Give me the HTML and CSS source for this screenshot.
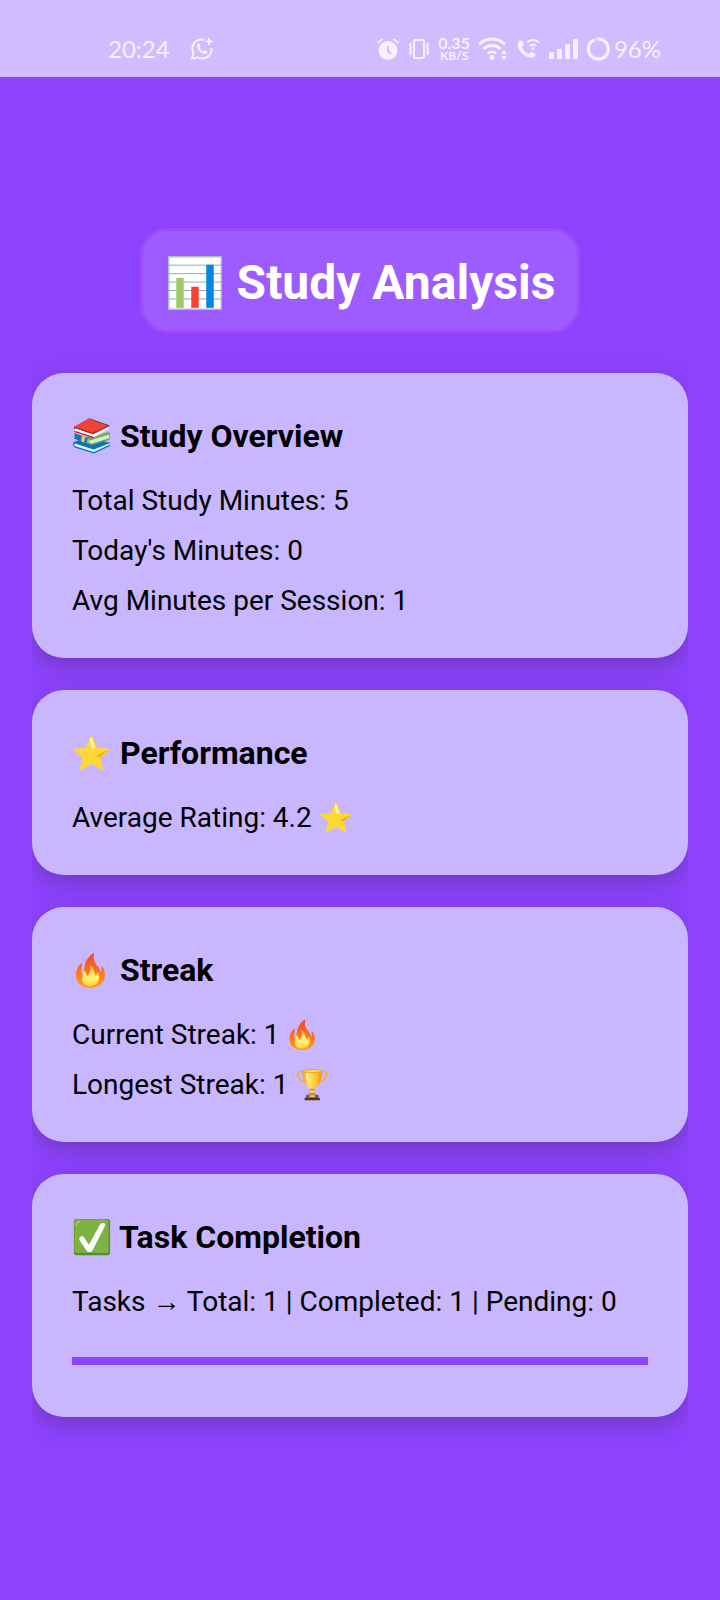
FILE: index.html
```html
<!DOCTYPE html>
<html lang="en">
  <head>
    <meta charset="UTF-8" />
    <meta name="viewport" content="width=device-width, initial-scale=1.0" />
    <title>Study Analysis</title>
    <link rel="stylesheet" href="styles.css">
  </head>

  <body>
    <!-- Shared emoji shapes -->
    <svg class="sprite" aria-hidden="true">
      <defs>
        <linearGradient id="flameFill" x1="0" y1="0" x2="0" y2="1">
          <stop offset="0" stop-color="#f4442e" />
          <stop offset="0.6" stop-color="#ff7b1a" />
          <stop offset="1" stop-color="#ff9c1c" />
        </linearGradient>
        <linearGradient id="flameCore" x1="0" y1="0" x2="0" y2="1">
          <stop offset="0" stop-color="#ffc23a" />
          <stop offset="0.6" stop-color="#fff27a" />
          <stop offset="1" stop-color="#ffd23c" />
        </linearGradient>
        <linearGradient id="cupFill" x1="0" y1="0" x2="1" y2="0">
          <stop offset="0" stop-color="#f79f1c" />
          <stop offset="0.35" stop-color="#ffe36b" />
          <stop offset="0.7" stop-color="#ffc42e" />
          <stop offset="1" stop-color="#ef9414" />
        </linearGradient>
      </defs>
      <symbol id="star" viewBox="-4 -6 140 140">
        <path fill="#fdd835" d="M68 7l16 39 39 3c4 0 5 4 2 7L95 81l10 37c1 4-3 7-6 5L64 102l-35 21c-3 2-7-1-6-5l10-37L3 56c-3-3-2-7 2-7l39-3L60 7c2-4 6-4 8 0z" />
        <path fill="#fff59d" d="M62 38l-3-25c0-5 5-5 7 0l10 27c2 5-1 9-5 9s-8-4-9-11z" />
        <path fill="#f4b400" d="M89 69l26-13c3-2 5 0 3 3L97 76c-5 4-11 5-13 2s0-6 5-9z" />
      </symbol>
      <symbol id="fire" viewBox="2 -8 142 142">
        <path fill="url(#flameFill)" d="M36 57c-2 8-1 15 3 21 2 3 6 2 6-2C43 48 52 20 76 4c3-2 5 0 4 4-4 17 2 29 14 43 4 5 7 11 8 17 1 3 5 2 5-2l-1-12c0-4 3-4 5-1 8 11 10 26 6 40-5 20-25 33-51 33-28 0-49-17-50-42-1-20 7-33 17-43 2-2 5-1 4 2z" />
        <path fill="url(#flameCore)" d="M65 51c-2-3 1-6 4-3 11 9 12 21 15 31 1 4 4 4 5 1l2-7c1-3 3-2 4 0 7 17 4 46-29 47-24 0-33-19-26-37 2-5 3-9 3-14 0-3 3-3 5-1 4 4 5 9 7 14 1 3 4 2 5-1 4-10 11-18 5-30z" />
      </symbol>
      <symbol id="trophy" viewBox="-4 -6 138 138">
        <path fill="none" stroke="#f6ae2d" stroke-width="6" d="M31 21C22 7 6 10 7 23c1 17 13 26 31 34M97 21c9-14 25-11 24 2-1 17-13 26-31 34" />
        <path fill="url(#cupFill)" d="M27 9h74c1 33-5 57-26 68-3 2-5 6-5 10v13H58V87c0-4-2-8-5-10C32 66 26 42 27 9z" />
        <path fill="#fff3a0" d="M39 18h9c-1 20 2 33 9 45-14-8-19-25-18-45z" />
        <ellipse cx="64" cy="10" rx="37" ry="6" fill="#ffd85a" stroke="#e99514" stroke-width="3" />
        <path fill="#e09013" d="M54 80h20l-2 7H56zM51 96h26v7H51z" />
        <path fill="#795548" d="M41 103h46l4 14H37z" />
        <path fill="#4e342e" d="M34 116h60v9H34z" />
        <path fill="#fdc33b" d="M53 105h22v8H53z" />
      </symbol>
    </svg>

    <div class="status-bar">
      <div class="status-group">
        <span class="status-text">20:24</span>
        <svg width="24" height="24" viewBox="0 0 24 24" fill="none" stroke="currentColor" stroke-width="2" aria-hidden="true">
          <path d="M14 3A9 9 0 0 0 3.500 16L2 21.500l5.500-1.200A9.500 9.500 0 0 0 21.500 11M19 1v7M15.500 4.500h7" />
          <path fill="currentColor" stroke="none" d="M7.500 7c1-1 2-.5 2.500.8.500 1.200.5 1.500-.5 2.500.8 2 2 3.300 4 4.200 1.200-1.300 1.400-1.400 2.600-.8 1.500.7 1.900 1.200 1 2.200-2.800 3.200-11.500-2.200-9.600-8.900z" />
        </svg>
      </div>
      <div class="status-group status-right">
        <svg width="24" height="24" viewBox="0 0 24 24" aria-hidden="true">
          <circle cx="12" cy="13.500" r="9.500" fill="currentColor" />
          <path fill="none" stroke="currentColor" stroke-width="2" stroke-linecap="round" d="M2 5.500l4-3M22 5.500l-4-3" />
          <path class="alarm-hands" d="M12 9v5l3 3" />
        </svg>
        <svg width="22" height="22" viewBox="0 0 22 22" fill="none" stroke="currentColor" stroke-width="2" aria-hidden="true">
          <rect x="6" y="2" width="10" height="18" rx="1" />
          <path d="M3 5l-1 2 1 2-1 2 1 2-1 2 1 2M19 5l1 2-1 2 1 2-1 2 1 2-1 2" />
        </svg>
        <span class="net-speed">
          <span>0.35</span>
          <span class="net-unit">KB/S</span>
        </span>
        <svg width="30" height="24" viewBox="0 0 30 24" fill="none" stroke="currentColor" stroke-width="3" aria-hidden="true">
          <path d="M1 7.500a18 18 0 0 1 26 0M5.500 12a12 12 0 0 1 17 0M10 16.500a6 6 0 0 1 8 0" />
          <circle cx="14" cy="20.500" r="2.500" fill="currentColor" stroke="none" />
          <path fill="currentColor" stroke="none" d="M23 17l3-4 3 4zM23 19l3 4 3-4z" />
        </svg>
        <svg width="24" height="24" viewBox="0 0 24 24" fill="none" stroke="currentColor" stroke-width="2" aria-hidden="true">
          <path fill="currentColor" stroke="none" d="M2 6c1-3 4-3 5-1s1 3.500-1 5c1.500 4 4 6 7 7 1.500-2 3-2 5-1 2 1 2 3 0 4C11 23 0 13 2 6z" />
          <path d="M11 5.500a8.500 8.500 0 0 1 12 0M14 9a4.500 4.500 0 0 1 6 0" />
          <circle cx="17" cy="11.500" r="1.500" fill="currentColor" stroke="none" />
        </svg>
        <svg width="30" height="22" viewBox="0 0 30 22" fill="currentColor" aria-hidden="true">
          <rect x="1" y="14" width="5" height="7" rx="1" />
          <rect x="9" y="11" width="5" height="10" rx="1" />
          <rect x="17" y="6" width="5" height="15" rx="1" />
          <rect x="25" y="1" width="5" height="20" rx="1" />
        </svg>
        <span class="battery">
          <svg width="24" height="24" viewBox="0 0 24 24" fill="none" stroke="currentColor" stroke-width="3" aria-hidden="true">
            <circle cx="12" cy="12" r="10" opacity="0.500" />
            <path d="M12 2a10 10 0 1 1-4 1" />
          </svg>
          <span class="status-text">96%</span>
        </span>
      </div>
    </div>

    <main class="container">
      <h1 class="page-title">
        <svg class="emoji" viewBox="0 0 128 128" role="img" aria-label="Bar chart">
          <path fill="#fff" stroke="#b0bec5" stroke-width="3" d="M8 8h112v112H8z" />
          <path stroke="#90a4ae" stroke-width="2" d="M8 26h112M8 44h112M8 62h112M8 80h112M8 98h112" />
          <path fill="#9ccc65" d="M24 53h16v64H24z" />
          <path fill="#f44336" d="M56 72h16v45H56z" />
          <path fill="#0288e0" d="M88 25h16v92H88z" />
        </svg>
        Study Analysis
      </h1>

      <div class="cards">
        <section class="card">
          <h2>
            <svg class="emoji" viewBox="0 0 128 128" role="img" aria-label="Books">
              <path fill="#0d6fb8" d="M6 83l50-17 64 20-50 31L9 100c-6-4-7-12-3-17z" />
              <path fill="#e3f2fd" d="M10 86l58 19 50-20v10l-49 21L11 98c-4-3-4-9-1-12z" />
              <path fill="none" stroke="#0277bd" stroke-width="4" d="M9 99l61 19 51-24M8 85l61 20 51-20" />
              <path fill="#7cb36b" d="M46 72l70-22 6 6-3 19-56 18-18-7z" />
              <path fill="#dcedc8" d="M51 78l67-19v12L63 88l-13-4z" />
              <path fill="none" stroke="#5d9b55" stroke-width="3" d="M121 56L60 76c-9 3-9 12 2 16l59-18" />
              <path fill="#1976a8" d="M8 54l42 16-5 18-37-15z" />
              <path fill="#f9c74f" d="M32 63l10 4-3 18-10-4z" />
              <path fill="#424242" d="M6 35L56 7l65 23-48 30-6 8L8 49z" />
              <path fill="#f44336" d="M6 34L55 9l59 22-47 23z" />
              <path fill="#fafafa" d="M10 39l57 19 49-25v9L70 68 11 50c-5-3-5-8-1-11z" />
              <path fill="none" stroke="#c62828" stroke-width="4" d="M8 49l61 20M7 36l61 20 49-24" />
            </svg>
            Study Overview
          </h2>
          <p>Total Study Minutes: 5</p>
          <p>Today's Minutes: 0</p>
          <p>Avg Minutes per Session: 1</p>
        </section>

        <section class="card">
          <h2>
            <svg class="emoji" role="img" aria-label="Star"><use href="#star" /></svg>
            Performance
          </h2>
          <p>
            Average Rating: 4.2
            <svg class="emoji" role="img" aria-label="Star"><use href="#star" /></svg>
          </p>
        </section>

        <section class="card">
          <h2>
            <svg class="emoji" role="img" aria-label="Fire"><use href="#fire" /></svg>
            Streak
          </h2>
          <p>
            Current Streak: 1
            <svg class="emoji" role="img" aria-label="Fire"><use href="#fire" /></svg>
          </p>
          <p>
            Longest Streak: 1
            <svg class="emoji" role="img" aria-label="Trophy"><use href="#trophy" /></svg>
          </p>
        </section>

        <section class="card">
          <h2>
            <svg class="emoji" viewBox="0 0 128 128" role="img" aria-label="Done">
              <rect x="6" y="6" width="116" height="116" rx="8" fill="#558b2f" />
              <rect x="8" y="6" width="112" height="110" rx="6" fill="#689f38" />
              <rect x="8" y="8" width="108" height="106" rx="6" fill="#7cb342" />
              <path fill="none" stroke="#aed581" stroke-width="4" stroke-linecap="round" d="M14 27c0-8 3-12 11-13" />
              <path fill="#fff" d="M24 67c3-6 12-7 15-1l15 23 35-64c5-9 21-7 17 3L66 106c-4 8-16 8-20 0L24 74c-1-2-1-5 0-7z" />
            </svg>
            Task Completion
          </h2>
          <p>Tasks → Total: 1 | Completed: 1 | Pending: 0</p>
          <progress class="task-progress" value="1" max="1" aria-label="Completed tasks"></progress>
        </section>
      </div>
    </main>
  </body>
</html>
```
FILE: styles.css
```css
body {
  margin: 0;
  min-height: 100vh;
  background-color: #8e43ff;
  color: #000;
  font-family: Roboto, "Liberation Sans", sans-serif;
}

.sprite {
  display: block;
  width: 0;
  height: 0;
}

/* Phone status bar */
.status-bar {
  display: flex;
  justify-content: space-between;
  align-items: center;
  box-sizing: border-box;
  height: 77px;
  padding: 20px 59px 0 108px;
  background-color: #d0bcff;
  color: #f8f0ff;
  font-family: Lato, sans-serif;
}

.status-group {
  display: flex;
  align-items: center;
  gap: 20px;
}

.status-right {
  gap: 8px;
}

.status-text {
  font-size: 24px;
  line-height: 28px;
}

.alarm-hands {
  fill: none;
  stroke: #d0bcff;
  stroke-width: 2;
}

.net-speed {
  display: flex;
  flex-direction: column;
  align-items: center;
  font-size: 16px;
  font-weight: bold;
  line-height: 15px;
}

.net-unit {
  font-size: 12px;
  line-height: 12px;
}

.battery {
  display: flex;
  align-items: center;
  gap: 4px;
}

/* Content */
.container {
  display: flex;
  flex-direction: column;
  align-items: center;
  gap: 40px;
  padding: 151px 32px 64px;
}

.page-title {
  margin: 0;
  padding: 22px 22px 18px;
  border: 3px solid #a04bf8;
  border-radius: 28px;
  background-color: #9d5cff;
  color: #fff;
  font-size: 48px;
  line-height: 59px;
}

.emoji {
  width: 35px;
  height: 35px;
  vertical-align: -8px;
}

.page-title .emoji {
  width: 60px;
  height: 60px;
  margin: -8px 0;
  vertical-align: -6px;
}

/* card shadows stop at the edges of the list */
.cards {
  display: flex;
  flex-direction: column;
  gap: 32px;
  align-self: stretch;
  clip-path: inset(-32px 0);
}

.card {
  padding: 40px 40px 32px;
  border-radius: 32px;
  background-color: #c8b6ff;
  box-shadow: 0 8px 24px rgba(60, 40, 80, 0.35);
}

.card h2 {
  margin: 0 0 16px;
  font-size: 32px;
  line-height: 47px;
}

.card h2 .emoji {
  width: 40px;
  height: 40px;
  vertical-align: -9px;
}

.card p {
  margin: 0;
  font-size: 28px;
  line-height: 50px;
}

.task-progress {
  display: block;
  width: 100%;
  height: 8px;
  margin: 30px 0 20px;
  border: none;
  background-color: #b795ff;
  appearance: none;
}

.task-progress::-webkit-progress-bar {
  background-color: #b795ff;
}

.task-progress::-webkit-progress-value {
  background-color: #8e43ff;
}
```
